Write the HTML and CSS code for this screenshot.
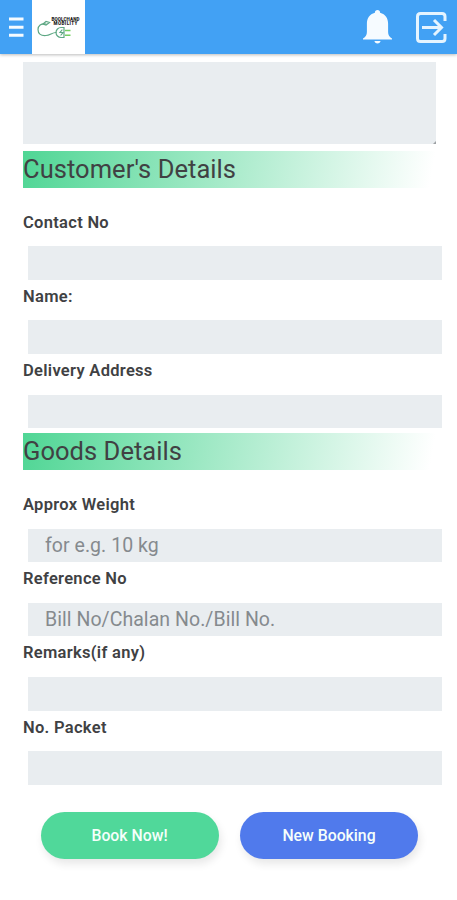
FILE: index.html
```html
<!DOCTYPE html>
<html lang="en">
<head>
<meta charset="utf-8">
<title>Booking</title>
<link rel="stylesheet" href="styles.css">
</head>
<body>
<header class="topbar">
  <svg class="menu" viewBox="0 0 15 21"><path d="M0 2h14.500M0 10.300h14.500M0 18.300h14.500"/></svg>
  <svg class="logo" viewBox="0 0 53 54">
    <g fill="none" stroke="#5da783" stroke-width="1.200" stroke-linecap="round">
      <path d="M14 24C9 23 6 26 6 29.500C6 34 9 36 14 35.500C18 35.500 20 32.500 24 32.500"/>
      <path d="M11 24l3-2.500l3.500 1l-3.500 2.500z"/>
      <path d="M32 27.500h-3a5 5 0 0 0 0 10h3z"/>
      <path d="M30 30l-2 2.500h3l-2 2.500"/>
    </g>
    <path d="M33 30.500h5.500M33 35.300h5.500" stroke="#75ce62" stroke-width="1.400"/>
    <text class="logo-text" x="19.500" y="20.800" textLength="28">BOOLCHAND</text>
    <text class="logo-text" x="21.500" y="25.300" textLength="24">MOBILITY</text>
  </svg>
  <div class="actions">
    <svg class="bell" viewBox="0 0 29 34"><path d="M14.500 0c1.600 0 2.600 1 2.600 2.700c5.400 1.300 8 5.800 8 11v8.300c0 3 1.200 4.700 3.900 6.500v1H0v-1c2.700-1.800 3.900-3.500 3.900-6.500v-8.300c0-5.200 2.600-9.700 8-11C11.900 1 12.900 0 14.500 0zM11.500 31h6c0 3.300-6 3.300-6 0z"/></svg>
    <svg class="exit" viewBox="0 0 31 31"><path d="M29 9V4.500Q29 1.500 26 1.500H4.500Q1.500 1.500 1.500 4.500v22q0 3 3 3H26q3 0 3-3V22M6 15.500h19M18 8l7.500 7.500L18 23"/></svg>
  </div>
</header>
<main class="form">
  <div class="notes"><svg class="grip" viewBox="0 0 3 3"><path d="M3 0v3H0z"/></svg></div>
  <h2 class="heading">Customer's Details</h2>
  <label class="field"><span class="label">Contact No</span><input class="input"></label>
  <label class="field"><span class="label">Name:</span><input class="input"></label>
  <label class="field"><span class="label">Delivery Address</span><input class="input"></label>
  <h2 class="heading">Goods Details</h2>
  <label class="field"><span class="label">Approx Weight</span><input class="input" placeholder="for e.g. 10 kg"></label>
  <label class="field"><span class="label">Reference No</span><input class="input" placeholder="Bill No/Chalan No./Bill No."></label>
  <label class="field"><span class="label">Remarks(if any)</span><input class="input"></label>
  <label class="field"><span class="label">No. Packet</span><input class="input"></label>
  <div class="buttons">
    <button class="button book">Book Now!</button>
    <button class="button new">New Booking</button>
  </div>
</main>
</body>
</html>
```
FILE: styles.css
```css
* { box-sizing: border-box; }
body { margin: 0; height: 900px; overflow: hidden; background: #fff; color: #404143; font-family: Roboto, sans-serif; }
.topbar { display: flex; align-items: center; height: 54px; padding: 0 10px 0 9px; background: #42a1f4; box-shadow: 0 1px 3px #0004; }
.menu { width: 15px; height: 21px; margin-right: 8px; stroke: #f5fbff; stroke-width: 3; }
.logo { width: 53px; height: 54px; background: #fff; }
.logo-text { font: 900 4.600px Roboto, sans-serif; fill: #222; }
.actions { display: flex; align-items: center; gap: 24px; margin-left: auto; }
.bell { width: 29px; height: 34px; fill: #f6fbff; }
.exit { width: 31px; height: 31px; fill: none; stroke: #e5f4ff; stroke-width: 3; }
.form { padding: 8px 15px 0 23px; }
.notes { display: flex; align-items: flex-end; justify-content: flex-end; width: 413px; height: 82.400px; background: #e9edf0; }
.grip { width: 3px; height: 3px; fill: #9da1a4; }
.heading { width: 415px; height: 37px; margin: 6.200px 0 18px; background: linear-gradient(100deg, #50d695, #fff 98%); font-size: 25.500px; font-weight: 400; line-height: 36px; letter-spacing: 0.050px; white-space: nowrap; }
.field { display: flex; flex-direction: column; }
.label { height: 40.700px; font-size: 16.500px; font-weight: 600; line-height: 33.600px; letter-spacing: 0.300px; }
.input { width: 413.500px; height: 33.500px; margin: 0 0 0 5.200px; padding: 0 16.800px; border: 0; border-radius: 0; background: #e9edf0; font: 19.500px Roboto, sans-serif; letter-spacing: 0.050px; }
.field + .heading { margin-top: 4.800px; }
.input::placeholder { color: #858a8e; opacity: 1; }
.buttons { display: flex; gap: 21.500px; padding: 27.500px 0 0 17.500px; }
.button { width: 178px; height: 47px; padding: 0 0 1px; border: 0; border-radius: 24px; box-shadow: 2px 5px 9px #00000018; color: #f5fffb; font: 500 15.800px Roboto, sans-serif; }
.book { background: #50d89a; }
.new { background: #507aec; }
```
